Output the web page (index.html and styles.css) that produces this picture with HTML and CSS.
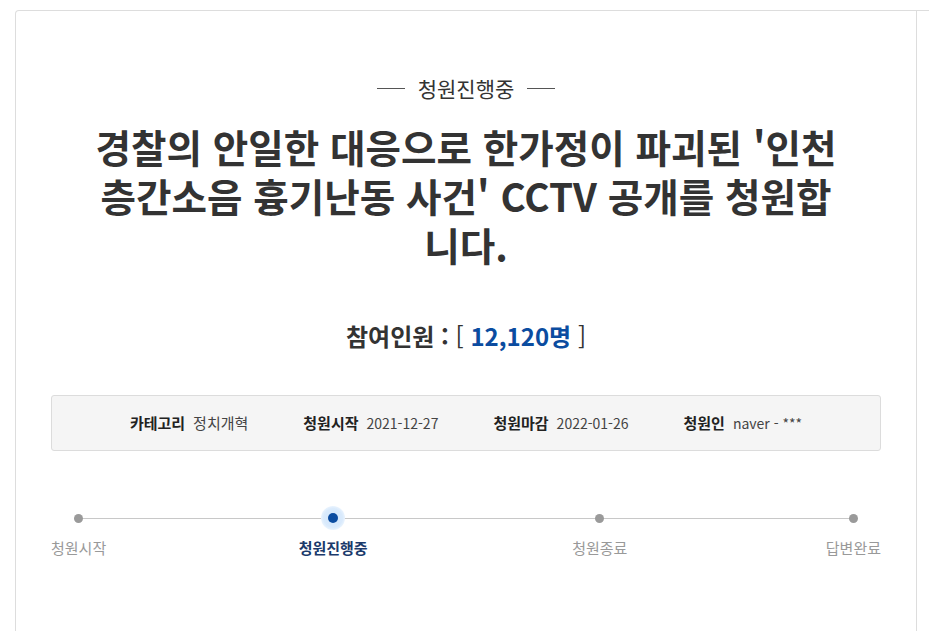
FILE: index.html
```html
<!DOCTYPE html>
<html lang="ko">
<head>
<meta charset="utf-8">
<title>청원진행중</title>
<link rel="stylesheet" href="styles.css">
</head>
<body>
<div class="page">
  <div class="card">
    <div class="status"><span class="status-line"></span><span class="status-text">청원진행중</span><span class="status-line"></span></div>
    <h1 class="title">경찰의 안일한 대응으로 한가정이 파괴된 '인천 층간소음 흉기난동 사건' CCTV 공개를 청원합니다.</h1>
    <p class="count">참여인원 : <span class="bracket">[</span> <span class="num">12,120명</span> <span class="bracket">]</span></p>
    <ul class="info">
      <li class="info-item"><strong>카테고리</strong><span>정치개혁</span></li>
      <li class="info-item"><strong>청원시작</strong><span class="digits">2021-12-27</span></li>
      <li class="info-item"><strong>청원마감</strong><span class="digits">2022-01-26</span></li>
      <li class="info-item"><strong>청원인</strong><span class="digits">naver - ***</span></li>
    </ul>
    <div class="progress">
      <span class="progress-line"></span>
      <div class="step"><span class="dot-wrap"><span class="dot"></span></span><span class="step-label">청원시작</span></div>
      <div class="step active"><span class="dot-wrap"><span class="dot"></span></span><span class="step-label">청원진행중</span></div>
      <div class="step"><span class="dot-wrap"><span class="dot"></span></span><span class="step-label">청원종료</span></div>
      <div class="step"><span class="dot-wrap"><span class="dot"></span></span><span class="step-label">답변완료</span></div>
    </div>
  </div>
  <div class="side"></div>
</div>
</body>
</html>
```
FILE: styles.css
```css
* { box-sizing: border-box; }
html, body { margin: 0; padding: 0; background: #fff; }
body {
  font-family: "Noto Sans CJK KR", "Noto Sans", sans-serif;
  color: #333;
  overflow: hidden;
}
.page {
  display: flex;
  padding: 10px 0 0 15px;
  height: 631px;
}
.card {
  width: 902px;
  flex: none;
  border: 1px solid #dddddd;
  border-bottom: none;
  border-radius: 4px 0 0 0;
  padding: 64px 35px 0;
}
.side {
  flex: 1;
  border-top: 1px solid #dddddd;
}
.status {
  display: flex;
  justify-content: center;
  align-items: center;
  gap: 13px;
  height: 26px;
}
.status-line {
  width: 28px;
  height: 1px;
  background: #555;
}
.status-text {
  font-size: 21px;
  line-height: 26px;
  color: #333;
}
.title {
  max-width: 756px;
  margin: 21px auto 0;
  text-align: center;
  font-size: 38.6px;
  line-height: 49px;
  font-weight: 700;
  color: #333;
  letter-spacing: 0;
}
.count {
  margin: 51px 0 0;
  text-align: center;
  font-size: 24px;
  line-height: 32px;
  font-weight: 700;
  color: #333;
}
.bracket { font-weight: 400; color: #333; }
.num { color: #0b4ca0; }
.info {
  list-style: none;
  margin: 43px 0 0;
  padding: 0;
  height: 56px;
  background: #f5f5f5;
  border: 1px solid #dcdcdc;
  border-radius: 3px;
  display: flex;
  justify-content: center;
  align-items: center;
  gap: 55px;
  font-size: 15px;
  line-height: 20px;
}
.info-item { display: flex; gap: 8px; }
.info-item strong { font-weight: 700; color: #222; }
.info-item span { color: #444; }
.info-item .digits { font-size: 14px; }
.progress {
  position: relative;
  margin-top: 55px;
  display: flex;
  justify-content: space-between;
}
.progress-line {
  position: absolute;
  left: 27px;
  right: 27px;
  top: 12px;
  height: 1px;
  background: #c8c8c8;
}
.step {
  position: relative;
  display: flex;
  flex-direction: column;
  align-items: center;
}
.dot-wrap {
  width: 24px;
  height: 24px;
  display: flex;
  align-items: center;
  justify-content: center;
  border-radius: 50%;
}
.dot {
  width: 9px;
  height: 9px;
  border-radius: 50%;
  background: #9a9a9a;
}
.step-label {
  margin-top: 8px;
  font-size: 15px;
  line-height: 20px;
  color: #999;
}
.step.active {
  margin: 0 6px 0 -6px;
}
.step.active .dot-wrap {
  background: radial-gradient(circle, #d3e6fb 0, #d9eafc 55%, #eef6fe 75%, rgba(238,246,254,0) 100%);
}
.step.active .dot {
  width: 10px;
  height: 10px;
  background: #0b4ca0;
}
.step.active .step-label {
  color: #1b3a6b;
  font-weight: 700;
}
```
